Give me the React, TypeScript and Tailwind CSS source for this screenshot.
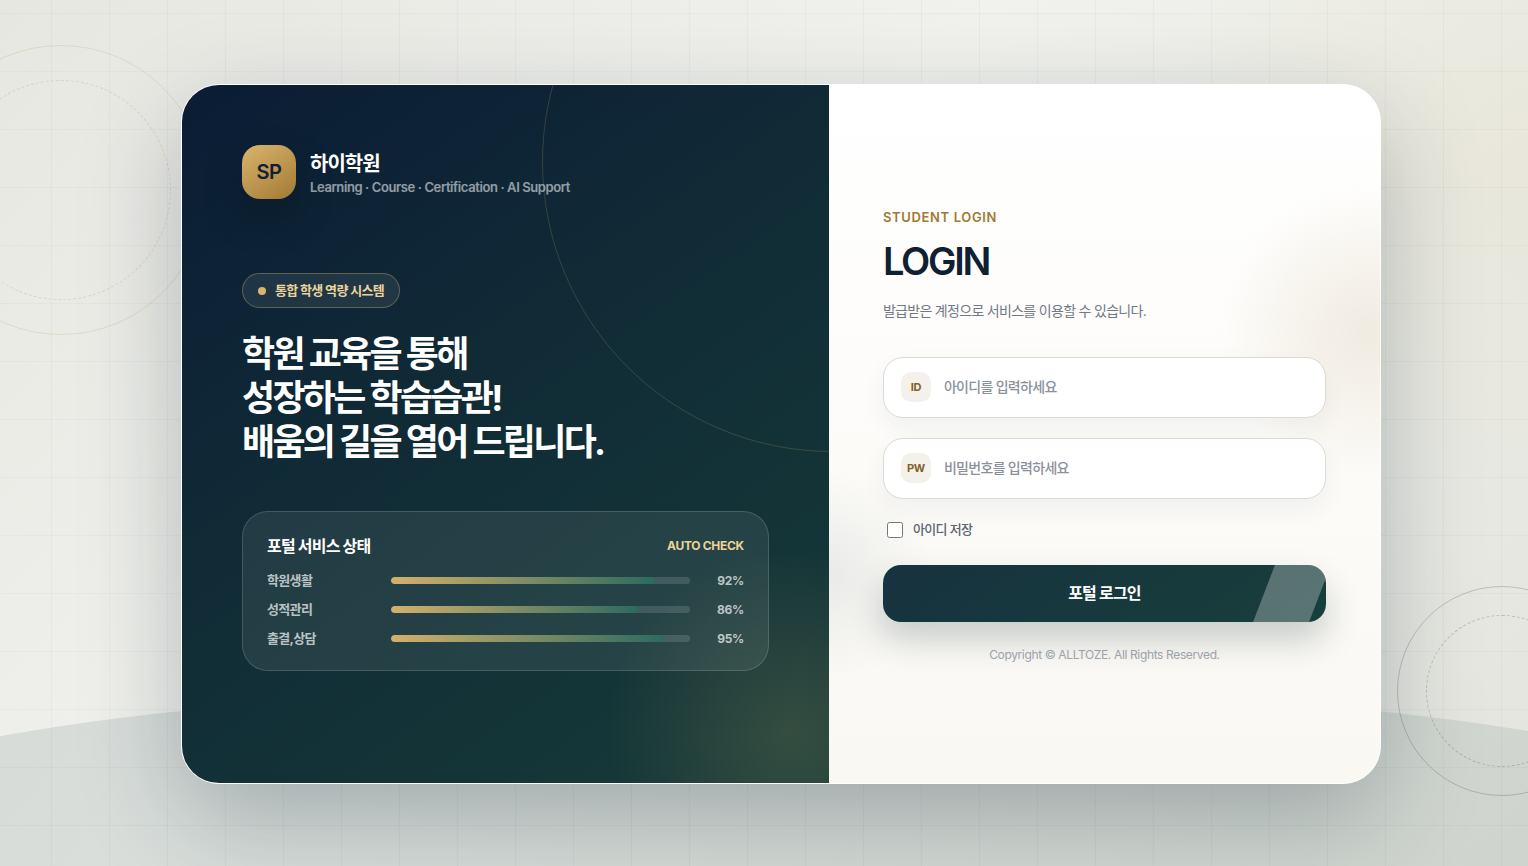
import { useState } from "react"

type Estado = {
  label: string
  value: number
}

const services: Estado[] = [
  { label: "학원생활", value: 92 },
  { label: "성적관리", value: 86 },
  { label: "출결,상담", value: 95 },
]

type FieldProps = {
  id: string
  badge: string
  type: string
  label: string
  placeholder: string
  value: string
  onChange: (value: string) => void
}

function Field({ id, badge, type, label, placeholder, value, onChange }: FieldProps) {
  return (
    <div className="flex h-[61px] items-center gap-[13px] rounded-[20px] border border-[#dcdad2] bg-white px-[17px] shadow-[0_10px_24px_rgba(16,32,51,0.05)]">
      <span className="flex size-[30px] shrink-0 items-center justify-center rounded-[10px] bg-[#f4f1ea] text-[11px] font-bold tracking-tight text-[#80602a]">
        {badge}
      </span>
      <input
        id={id}
        type={type}
        aria-label={label}
        placeholder={placeholder}
        value={value}
        onChange={(e) => onChange(e.target.value)}
        className="h-full min-w-0 flex-1 bg-transparent pb-[2px] text-[14px] font-medium tracking-tighter text-[#102033] outline-none placeholder:text-[#8a919b]"
      />
    </div>
  )
}

function Background() {
  return (
    <div aria-hidden="true" className="pointer-events-none absolute inset-0 overflow-hidden bg-[radial-gradient(circle_at_98%_18%,rgba(222,200,140,0.12),transparent_20%),linear-gradient(135deg,#e7e7e2_0%,#f1f2ed_42%,#e3e4dd_100%)]">
      <div className="absolute -bottom-[50px] left-[-10%] h-[232px] w-[122%] rounded-t-[50%] bg-[linear-gradient(90deg,rgba(23,59,71,0.11),rgba(31,78,69,0.1))]" />
      <div className="absolute inset-0 bg-[linear-gradient(rgba(16,32,51,0.035)_1px,transparent_1px),linear-gradient(90deg,rgba(16,32,51,0.035)_1px,transparent_1px)] bg-[size:58px_58px] bg-[position:51px_13px]" />
      <div className="absolute top-[45px] -left-[84px] size-[290px] rounded-full border border-[#b48c46]/20 p-[34px]">
        <div className="size-full rounded-full border border-dashed border-[#b48c46]/25" />
      </div>
      <div className="absolute -right-[79px] bottom-[70px] size-[210px] rounded-full border border-[#1f4e45]/25 p-[28px]">
        <div className="size-full rounded-full border border-dashed border-[#1f4e45]/25" />
      </div>
    </div>
  )
}

function Intro() {
  return (
    <section className="relative overflow-hidden bg-[radial-gradient(circle_185px_at_calc(100%_-_38px)_calc(100%_-_50px),rgba(216,180,106,0.16),transparent),linear-gradient(145deg,#0b1c35_0%,#112d36_50%,#163b39_100%)] p-[60px] text-white">
      <div className="absolute -top-[213px] -right-[293px] size-[580px] rounded-full border border-[#d8b46a]/20" />

      <div className="flex items-center gap-[14px]">
        <div className="flex size-[54px] items-center justify-center rounded-[18px] bg-[linear-gradient(145deg,#d9b56d,#a27933)] text-[20px] font-semibold tracking-tight text-[#102033] shadow-[0_18px_40px_rgba(0,0,0,0.22)]">
          SP
        </div>
        <div className="pt-[2px]">
          <p className="text-[20px] leading-[28px] font-bold tracking-tighter">하이학원</p>
          <p className="text-[13px] leading-[18px] font-semibold tracking-[-0.03em] text-white/55">
            Learning · Course · Certification · AI Support
          </p>
        </div>
      </div>

      <div className="mt-[74px] inline-flex h-[35px] items-center gap-[9px] rounded-full border border-[#d8b46a]/35 bg-white/8 px-[15px] text-[13px] font-bold tracking-tighter text-[#ead49b]">
        <span className="size-2 rounded-full bg-[#d9b56d]" />
        통합 학생 역량 시스템
      </div>

      <h1 className="mt-[24px] text-[36px] leading-[44px] font-bold tracking-[-0.075em]">
        학원 교육을 통해
        <br />
        성장하는 학습습관!
        <br />
        배움의 길을 열어 드립니다.
      </h1>

      <div className="mt-[47px] rounded-[26px] border border-white/15 bg-white/8 px-[24px] pt-[24px] pb-[23px]">
        <div className="mb-[16px] flex h-[20px] items-center justify-between">
          <h2 className="text-[16px] font-bold tracking-tighter">포털 서비스 상태</h2>
          <span className="text-[12px] font-bold tracking-tight text-[#ead49b]">AUTO CHECK</span>
        </div>
        <ul className="flex flex-col gap-[12px]">
          {services.map((item) => (
            <li
              key={item.label}
              className="grid grid-cols-[110px_1fr_40px] items-center gap-[14px] text-[13px] leading-[17px] font-bold text-white/70"
            >
              <span className="tracking-tighter">{item.label}</span>
              <div className="h-[7px] overflow-hidden rounded-full bg-white/13">
                <div
                  className="h-full rounded-full bg-[linear-gradient(90deg,#d4b06a,#2d6a5f)]"
                  style={{ width: `${item.value * 0.96}%` }}
                />
              </div>
              <span className="text-right text-[12px] tracking-tight">{item.value}%</span>
            </li>
          ))}
        </ul>
      </div>
    </section>
  )
}

function LoginPanel() {
  const [userId, setUserId] = useState("")
  const [password, setPassword] = useState("")

  return (
    <section className="flex flex-col justify-center bg-[radial-gradient(circle_147px_at_calc(100%_-_12px)_246px,rgba(195,172,132,0.22),transparent),radial-gradient(circle_105px_at_0_490px,rgba(23,59,71,0.08),transparent),linear-gradient(180deg,#ffffff,#faf8f3)] px-[54px] pt-[2px]">
      <p className="text-[13px] leading-[20px] font-semibold tracking-wider text-[#a27933]">STUDENT LOGIN</p>
      <h2 className="mt-[11px] text-[38px] leading-[46px] font-semibold tracking-[-0.06em] text-[#102033]">LOGIN</h2>
      <p className="mt-[16px] text-[14px] leading-[22px] tracking-tighter text-[#727986]">
        발급받은 계정으로 서비스를 이용할 수 있습니다.
      </p>

      <form className="mt-[35px] flex flex-col" onSubmit={(e) => e.preventDefault()}>
        <div className="flex flex-col gap-[20px]">
          <Field id="user-id" badge="ID" type="text" label="아이디" placeholder="아이디를 입력하세요" value={userId} onChange={setUserId} />
          <Field id="user-pw" badge="PW" type="password" label="비밀번호" placeholder="비밀번호를 입력하세요" value={password} onChange={setPassword} />
        </div>

        <label className="mt-[20px] flex h-[22px] items-center gap-[10px] self-start pl-[4px] text-[13px] font-medium tracking-tighter text-[#5c6470]">
          <input type="checkbox" className="size-4" />
          아이디 저장
        </label>

        <button
          type="submit"
          className="relative mt-[24px] h-[57px] cursor-pointer overflow-hidden rounded-[18px] bg-[linear-gradient(145deg,#16323f,#183f3b)] text-[16px] font-bold tracking-tighter text-white shadow-[0_18px_34px_rgba(16,45,51,0.22)]"
        >
          포털 로그인
          <span className="absolute inset-y-0 right-[6px] w-[56px] -skew-x-[21deg] bg-white/28" />
        </button>
      </form>

      <p className="mt-[24px] text-center text-[12px] leading-[18px] tracking-[-0.03em] text-[#a3a8b1]">
        Copyright © ALLTOZE. All Rights Reserved.
      </p>
    </section>
  )
}

export default function App() {
  return (
    <div className="relative flex min-h-screen items-center justify-center pt-[42px] pr-6 pb-10 pl-[58px] font-['Inter','Noto_Sans_CJK_KR',sans-serif]">
      <Background />
      <main className="relative grid min-h-[700px] w-full max-w-[1200px] grid-cols-[54fr_46fr] overflow-hidden rounded-[38px] border border-white bg-white shadow-[0_34px_100px_rgba(16,32,51,0.27)]">
        <Intro />
        <LoginPanel />
      </main>
    </div>
  )
}
